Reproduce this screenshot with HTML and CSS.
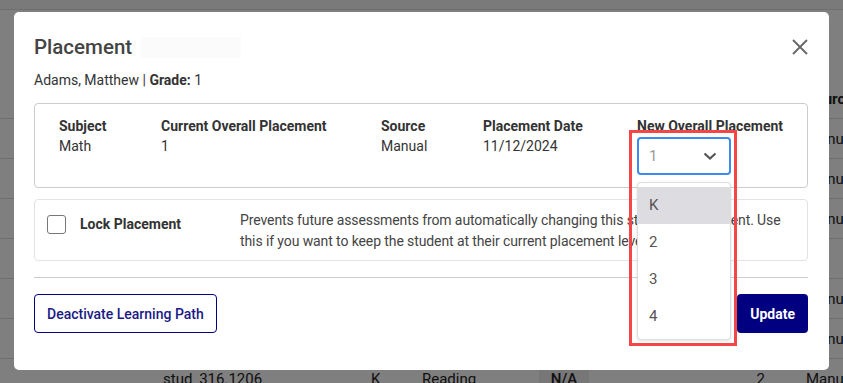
FILE: index.html
```html
<!DOCTYPE html>
<html lang="en">
<head>
    <meta charset="UTF-8">
    <meta name="viewport" content="width=device-width, initial-scale=1.0">
    <title>Placement</title>
    <link rel="stylesheet" href="styles.css">
</head>
<body>
    <!-- page behind the dialog -->
    <div class="page">
        <div class="topbar"></div>
        <div class="spacer"></div>
        <div class="grid-row head"><span class="c-src">Source</span></div>
        <div class="grid-row"><span class="c-src">Manual</span></div>
        <div class="grid-row"><span class="c-src">Manual</span></div>
        <div class="grid-row"><span class="c-src">Manual</span></div>
        <div class="grid-row"></div>
        <div class="grid-row"><span class="c-src">Manual</span></div>
        <div class="grid-row"><span class="c-src">Manual</span></div>
        <div class="grid-row">
            <span class="c-id">stud_316.1206</span>
            <span class="c-grade">K</span>
            <span class="c-subj">Reading</span>
            <span class="c-na">N/A</span>
            <span class="c-num">2</span>
            <span class="c-src">Manual</span>
        </div>
    </div>

    <div class="backdrop"></div>

    <div class="modal">
        <div class="modal-header">
            <h2>Placement <span class="blank"></span></h2>
            <button class="close" aria-label="Close">
                <svg width="16" height="16" viewBox="0 0 16 16"><path d="M1 1L15 15M15 1L1 15" stroke="#666" stroke-width="1.8" fill="none"/></svg>
            </button>
        </div>
        <p class="student">Adams, Matthew | <b>Grade:</b> 1</p>

        <div class="info-box">
            <div class="col">
                <div class="label">Subject</div>
                <div class="value">Math</div>
            </div>
            <div class="col">
                <div class="label">Current Overall Placement</div>
                <div class="value">1</div>
            </div>
            <div class="col">
                <div class="label">Source</div>
                <div class="value">Manual</div>
            </div>
            <div class="col">
                <div class="label">Placement Date</div>
                <div class="value">11/12/2024</div>
            </div>
            <div class="col">
                <div class="label">New Overall Placement</div>
                <div class="select-wrap">
                    <div class="select">
                        <span>1</span>
                        <svg width="14" height="8" viewBox="0 0 14 8"><path d="M1.5 1.5L7 6.5L12.5 1.5" stroke="#555" stroke-width="2.2" fill="none"/></svg>
                    </div>
                    <ul class="options">
                        <li class="active">K</li>
                        <li>2</li>
                        <li>3</li>
                        <li>4</li>
                    </ul>
                    <div class="highlight"></div>
                </div>
            </div>
        </div>

        <div class="lock-box">
            <span class="checkbox"></span>
            <span class="lock-label">Lock Placement</span>
            <p class="lock-text">Prevents future assessments from automatically changing this student's placement. Use this if you want to keep the student at their current placement level.</p>
        </div>

        <hr class="divider">

        <div class="actions">
            <button class="btn-outline">Deactivate Learning Path</button>
            <button class="btn-primary">Update</button>
        </div>
    </div>
</body>
</html>
```

FILE: styles.css
```css
* {
    box-sizing: border-box;
}

body {
    font-family: 'Roboto', 'Liberation Sans', sans-serif;
    margin: 0;
    color: #333;
    background: #fff;
    font-size: 14px;
}

/* background page */
.page {
    height: 383px;
    overflow: hidden;
}

.topbar {
    height: 10px;
    background: #f5f5f5;
    border-bottom: 1px solid #ddd;
}

.spacer {
    height: 69px;
}

.grid-row {
    display: grid;
    grid-template-columns: 163px 208px 51px 117px 50px 177px 40px 1fr;
    height: 40px;
    border-bottom: 1px solid #ddd;
    align-items: center;
    font-size: 15px;
    color: #222;
    white-space: nowrap;
}

.grid-row.head {
    font-weight: bold;
}

.c-id { grid-column: 2; }
.c-grade { grid-column: 3; }
.c-subj { grid-column: 4; }
.c-src { grid-column: 8; }

.c-na {
    grid-column: 5;
    background: #eee;
    height: 100%;
    display: flex;
    align-items: center;
    justify-content: center;
    font-weight: 500;
}

.c-num {
    grid-column: 6;
    text-align: right;
    padding-right: 1px;
}

.backdrop {
    position: fixed;
    inset: 0;
    background: rgba(0, 0, 0, 0.5);
}

/* dialog */
.modal {
    position: absolute;
    left: 14px;
    top: 12px;
    width: 815px;
    height: 358px;
    background: #fff;
    border-radius: 5px;
    padding: 20px 21px 20px 20px;
}

.modal-header {
    display: flex;
    justify-content: space-between;
    align-items: flex-start;
}

.modal-header h2 {
    margin: 0;
    font-size: 20.5px;
    font-weight: 500;
    line-height: 30px;
    color: #444;
    display: flex;
    align-items: center;
}

.blank {
    display: inline-block;
    width: 100px;
    height: 21px;
    margin-left: 9px;
    background: #fbfbfb;
}

.close {
    border: none;
    background: none;
    padding: 0;
    margin-top: 7px;
    cursor: pointer;
}

.student {
    margin: 8px 0 0;
    line-height: 20px;
    color: #333;
}

.student b {
    font-weight: bold;
}

.info-box {
    margin-top: 13px;
    border: 1px solid #ccc;
    border-radius: 4px;
    height: 85px;
    padding: 12px 0 0 24px;
    display: grid;
    grid-template-columns: 102px 220px 102px 154px auto;
}

.label {
    font-weight: bold;
    line-height: 20px;
    color: #333;
}

.value {
    line-height: 21px;
    color: #333;
}

.select-wrap {
    position: relative;
    margin-top: 1px;
    width: 94px;
}

.select {
    height: 38px;
    border: 2px solid #3c8cf0;
    border-radius: 4px;
    display: flex;
    align-items: center;
    justify-content: space-between;
    padding: 0 12px 0 10px;
    color: #999;
    font-size: 15px;
}

.options {
    position: absolute;
    left: 0;
    top: 45px;
    width: 94px;
    margin: 0;
    padding: 4px 0;
    list-style: none;
    background: #fff;
    border: 1px solid #ddd;
    border-radius: 4px;
    box-shadow: 0 1px 3px rgba(0, 0, 0, 0.12);
    z-index: 2;
}

.options li {
    height: 37px;
    line-height: 36px;
    padding-left: 11px;
    color: #555;
    font-size: 15px;
}

.options li.active {
    background: #dcdce1;
}

.highlight {
    position: absolute;
    left: -8px;
    top: -7px;
    width: 108px;
    height: 216px;
    border: 3px solid #f44646;
    z-index: 3;
    pointer-events: none;
}

.lock-box {
    margin-top: 11px;
    border: 1px solid #e3e3e3;
    border-radius: 4px;
    display: flex;
    align-items: flex-start;
    padding: 10px 8px 10px 12px;
    height: 62px;
}

.checkbox {
    width: 19px;
    height: 19px;
    flex: none;
    border: 1px solid #777;
    border-radius: 3px;
    margin-top: 5px;
}

.lock-label {
    font-weight: bold;
    width: 160px;
    flex: none;
    margin-left: 14px;
    margin-top: 4px;
    line-height: 20px;
}

.lock-text {
    margin: 0;
    line-height: 20.5px;
    color: #444;
    letter-spacing: -0.1px;
}

.divider {
    border: none;
    border-top: 1px solid #ccc;
    margin: 16px 0 0;
}

.actions {
    display: flex;
    justify-content: space-between;
    margin-top: 16px;
}

.actions button {
    height: 39px;
    border-radius: 4px;
    font-family: inherit;
    font-size: 14px;
    cursor: pointer;
}

.btn-outline {
    background: #fff;
    border: 1px solid #000080;
    color: #1a1a84;
    font-weight: 500;
    padding: 0 12px;
}

.btn-primary {
    background: #000080;
    border: none;
    color: #fff;
    font-weight: bold;
    padding: 0 13px;
}
```
